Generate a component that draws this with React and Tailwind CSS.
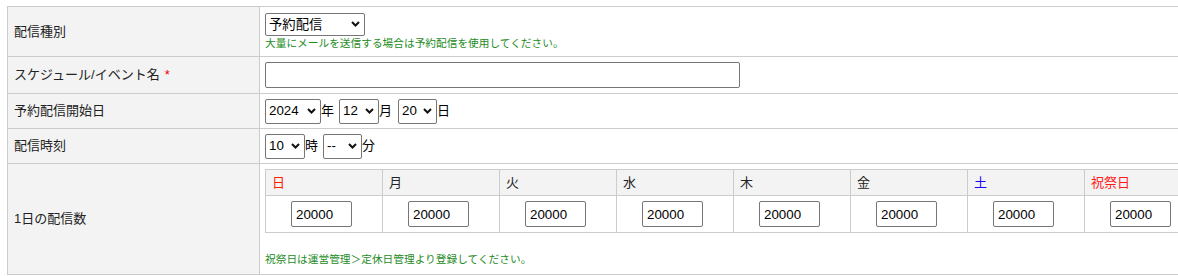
import React from 'react';

const font = "font-['Liberation_Sans','Noto_Sans_CJK_JP',sans-serif]";

function Chevron() {
  return (
    <svg className="pointer-events-none absolute right-[5px] top-1/2 -translate-y-1/2" width="9" height="6" viewBox="0 0 9 6">
      <path d="M1 1l3.5 3.5L8 1" fill="none" stroke="#111" strokeWidth="2" />
    </svg>
  );
}

function Select({ value, options, className }) {
  return (
    <div className={`relative shrink-0 ${className}`}>
      <select
        defaultValue={value}
        className="w-full h-full appearance-none border border-[#767676] rounded-[2px] bg-white pl-[3px] text-[13.33px] leading-none text-black outline-none"
      >
        {options.map((o) => (
          <option key={o}>{o}</option>
        ))}
      </select>
      <Chevron />
    </div>
  );
}

const label = 'bg-[#f3f3f3] border-r border-b border-[#cccccc] flex items-center pl-[6px] text-[13px] leading-[16px] text-[#222]';
const cell = 'border-r border-b border-[#cccccc] px-[5px] bg-white';
const note = 'text-[10.7px] leading-[12px] text-[#1e8c1e]';

const days = [
  { d: '日', c: 'text-[#ff1a00]' },
  { d: '月', c: 'text-[#222]' },
  { d: '火', c: 'text-[#222]' },
  { d: '水', c: 'text-[#222]' },
  { d: '木', c: 'text-[#222]' },
  { d: '金', c: 'text-[#222]' },
  { d: '土', c: 'text-[#1a00ff]' },
  { d: '祝祭日', c: 'text-[#ff1a1a]' },
];

export default function App() {
  return (
    <div className={`w-full h-[276px] overflow-hidden bg-white ${font}`}>
      <div className="ml-[7px] mt-[6px] w-[1201px] grid grid-cols-[252px_949px] grid-rows-[50px_37px_35px_35px_111px] border-t border-l border-[#cccccc]">
        <div className={label}>配信種別</div>
        <div className={`${cell} pt-[5px] flex flex-col`}>
          <Select value="予約配信" options={['予約配信', '即時配信']} className="w-[100px] h-[23px]" />
          <p className={`${note} mt-[2px]`}>大量にメールを送信する場合は予約配信を使用してください。</p>
        </div>

        <div className={label}>
          スケジュール/イベント名<span className="ml-[5px] text-[#ee0000]">*</span>
        </div>
        <div className={`${cell} flex items-center`}>
          <input type="text" className="w-[475px] h-[26px] border border-[#767676] rounded-[2px] bg-white outline-none" />
        </div>

        <div className={label}>予約配信開始日</div>
        <div className={`${cell} flex items-center text-[13px] text-black`}>
          <Select value="2024" options={['2024', '2025']} className="w-[56px] h-[25px]" />
          <span className="mr-[5px]">年</span>
          <Select value="12" options={['11', '12']} className="w-[40px] h-[25px]" />
          <span className="mr-[6px]">月</span>
          <Select value="20" options={['19', '20']} className="w-[39px] h-[25px]" />
          <span>日</span>
        </div>

        <div className={label}>配信時刻</div>
        <div className={`${cell} flex items-center text-[13px] text-black`}>
          <Select value="10" options={['09', '10']} className="w-[40px] h-[25px]" />
          <span className="mr-[5px]">時</span>
          <Select value="--" options={['--', '00']} className="w-[39px] h-[25px]" />
          <span>分</span>
        </div>

        <div className={label}>1日の配信数</div>
        <div className={`${cell} pt-[5px]`}>
          <div className="grid grid-cols-[repeat(8,117px)] grid-rows-[26px_37px] border-t border-l border-[#cccccc]">
            {days.map((x) => (
              <div key={x.d} className={`bg-[#f3f3f3] border-r border-b border-[#cccccc] flex items-center pl-[6px] text-[13px] ${x.c}`}>
                {x.d}
              </div>
            ))}
            {days.map((x) => (
              <div key={x.d + 'n'} className="border-r border-b border-[#cccccc] flex items-center pl-[25px]">
                <input
                  type="text"
                  defaultValue="20000"
                  className="w-[61px] h-[26px] border border-[#767676] rounded-[2px] bg-white px-[4px] text-[13.33px] text-black outline-none"
                />
              </div>
            ))}
          </div>
          <p className={`${note} mt-[20px]`}>祝祭日は運営管理＞定休日管理より登録してください。</p>
        </div>
      </div>
    </div>
  );
}
